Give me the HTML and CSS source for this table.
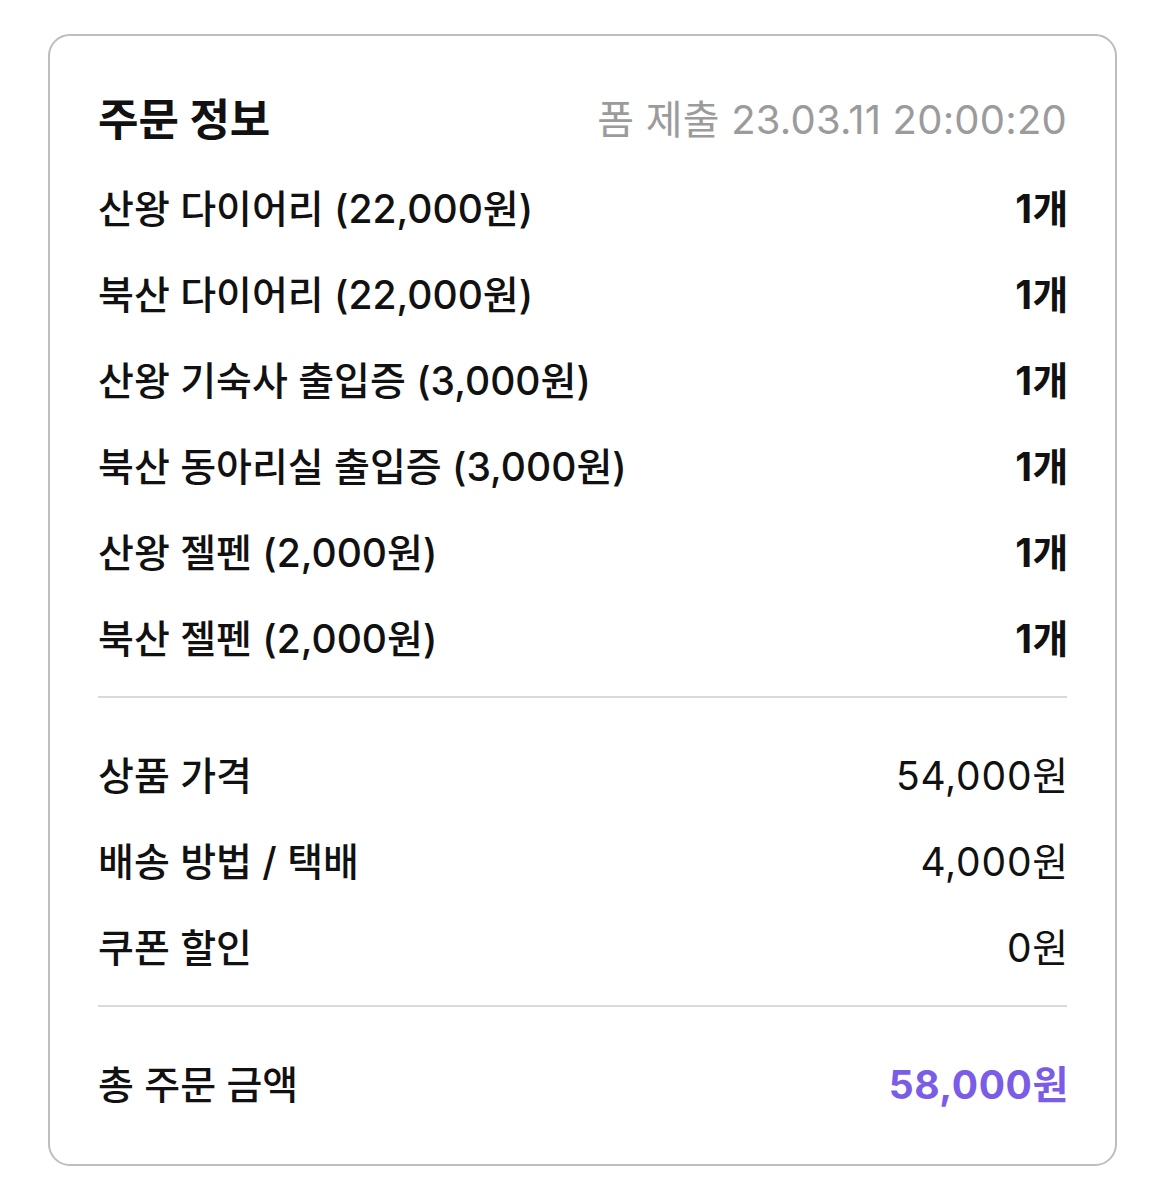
FILE: index.html
```html
<!DOCTYPE html>
<html lang="ko">
<head>
<meta charset="utf-8">
<link rel="stylesheet" href="styles.css">
</head>
<body>
<div class="card">
  <div class="row head">
    <span class="title">주문 정보</span>
    <span class="date">폼 제출 23.03.11 20:00:20</span>
  </div>
  <div class="items">
    <div class="row"><span class="label">산왕 다이어리 (22,000원)</span><span class="qty">1개</span></div>
    <div class="row"><span class="label">북산 다이어리 (22,000원)</span><span class="qty">1개</span></div>
    <div class="row"><span class="label">산왕 기숙사 출입증 (3,000원)</span><span class="qty">1개</span></div>
    <div class="row"><span class="label">북산 동아리실 출입증 (3,000원)</span><span class="qty">1개</span></div>
    <div class="row"><span class="label">산왕 젤펜 (2,000원)</span><span class="qty">1개</span></div>
    <div class="row"><span class="label">북산 젤펜 (2,000원)</span><span class="qty">1개</span></div>
  </div>
  <div class="divider"></div>
  <div class="summary">
    <div class="row"><span class="label">상품 가격</span><span class="value">54,000원</span></div>
    <div class="row"><span class="label">배송 방법 / 택배</span><span class="value">4,000원</span></div>
    <div class="row"><span class="label">쿠폰 할인</span><span class="value">0원</span></div>
  </div>
  <div class="divider"></div>
  <div class="row total">
    <span class="label">총 주문 금액</span>
    <span class="amount">58,000원</span>
  </div>
</div>
</body>
</html>
```
FILE: styles.css
```css
html, body {
  margin: 0;
  padding: 0;
  background: #ffffff;
}
body {
  font-family: "Inter", "Noto Sans CJK KR", "Noto Sans", sans-serif;
  color: #111111;
}
.card {
  box-sizing: border-box;
  margin: 34px 0 0 48px;
  width: 1069px;
  height: 1132px;
  border: 2px solid #bdbdbd;
  border-radius: 22px;
  padding: 38px 46px 0 48px;
}
.row {
  display: flex;
  justify-content: space-between;
  align-items: center;
  height: 86px;
  font-size: 39px;
  letter-spacing: 0;
}
.head {
  margin-bottom: 3px;
  padding-right: 2px;
}
.title {
  font-weight: 700;
  font-size: 44px;
}
.date {
  color: #9b9b9b;
  font-weight: 400;
  font-size: 40px;
  letter-spacing: 0.2px;
}
.label {
  font-weight: 500;
}
.qty {
  font-weight: 700;
  letter-spacing: 0.5px;
}
.value {
  font-weight: 400;
  letter-spacing: 0.8px;
}
.divider {
  height: 2px;
  background: #d9d9d9;
  margin: 17px 2px 32px 0;
}
.amount {
  color: #7b5ce6;
  font-weight: 700;
  letter-spacing: 0.6px;
}
```
